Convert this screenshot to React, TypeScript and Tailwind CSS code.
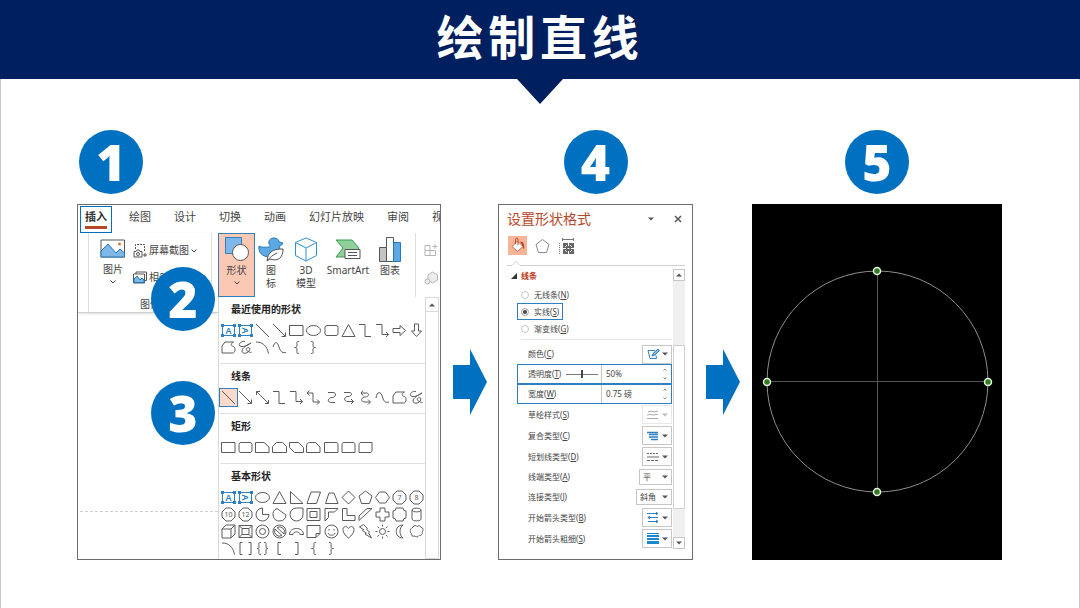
import type { ReactNode } from "react";

/**
 * Tutorial slide: "Draw a straight line" in five numbered steps.
 * Insert tab + shape gallery, format pane, and the resulting drawing.
 */
const tabs = ["绘图", "设计", "切换", "动画", "幻灯片放映", "审阅", "视"];

const octagon = "M6 2h5l4 4v5l-4 4H6l-4-4V6z";

// outlines on a 17 x 17 cell
const outlines: Record<string, string> = {
  line: "M2 2l13 13",
  arrowLine: "M2 2l12 12M14.500 10.500v4h-4",
  doubleArrow: "M2.500 2.500l12 12M2.500 6v-3.500h3.500M14.500 11v3.500h-3.500",
  rect: "M1.500 3.500h13.500v10H1.500z",
  ellipse: "M1.500 8.500a7 5 0 1 0 14 0a7 5 0 1 0-14 0z",
  roundRect: "M4 3.500h9a2 2 0 0 1 2 2v6a2 2 0 0 1-2 2H4a2 2 0 0 1-2-2v-6a2 2 0 0 1 2-2z",
  triangle: "M8.500 2.500l6.500 12H2z",
  elbow: "M2 2.500h6v12h6",
  elbowArrow: "M2 2.500h6v10h6.500M12 10l2.500 2.500l-2.500 2.500",
  elbowDouble: "M2 4h6v9h6.500M4.500 1.500l-2.500 2.500l2.500 2.500M12 10.500l2.500 2.500l-2.500 2.500",
  rightArrow: "M2 6.500h7v-3l5.500 5l-5.500 5v-3H2z",
  downArrow: "M6.500 2v7h-3l5 5.500l5-5.500h-3V2z",
  freeform: "M5 3h8.500c-3 1.500-3 4 0 4.500c2 .5 2.500 6.500-1 6.500H2V7z",
  scribble: "M8 2.500c-4-1-7 3-5 4.500s7 0 11-3c-4 2-9 5-9 8s5 3 7 0s0-4-2-3s0 4 4.500 4.500",
  arc: "M2 3c7 0 11 4 12.500 11.500",
  curve: "M2 8c2-6 4-6 6 0s4 6 7 5.500",
  braceLeft: "M11 2.500c-3 0-2 1-2 3.500s-1 2.500-2.500 2.500c1.500 0 2.500 0 2.500 2.500s-1 3.500 2 3.500",
  braceRight: "M6 2.500c3 0 2 1 2 3.500s1 2.500 2.500 2.500c-1.500 0-2.500 0-2.500 2.500s1 3.500-2 3.500",
  sCurve: "M5 3.500h5c4 0 3 5-1 5s-6 5 0 5h3",
  sArrow: "M4 3.500h5c4 0 3 4-1 4s-5 5 0 5h5M11 10l2.500 2.500l-2.500 2.500",
  sDouble: "M4 4h5c4 0 3 4-1 4s-5 5 0 5h5M6 1.500l-2 2.500l2 2.500M11 10.500l2.500 2.500l-2.500 2.500",
  wave: "M2 9c1-7 5-7 6.500-1s4 5.500 6.500 5",
  snipOne: "M1.500 3.500h8.500l5 4.500v5.500H1.500z",
  snipSame: "M5.500 3.500h6l4 4v6h-14v-6z",
  snipDiag: "M1.500 3.500h9l5 5v5h-9l-5-5z",
  snipRound: "M4.500 3.500h6l4.500 4.500v5.500H1.500V7c0-2 1-3.500 3-3.500z",
  roundOne: "M1.500 3.500h11.500c1.500 0 2 1 2 2v8H1.500z",
  roundSame: "M4 3.500h9c1.500 0 2 1 2 2v8H2v-8c0-1 .5-2 2-2z",
  roundDiag: "M4 3.500h11v8c0 1-.5 2-2 2H2v-8c0-1 .5-2 2-2z",
  rightTriangle: "M2.500 2.500v12h12.500z",
  parallelogram: "M6 3h9.500l-4 11.500H2z",
  trapezoid: "M6 4h5l4 10.500H2.500z",
  diamond: "M8.500 2l6.500 6.500l-6.500 6.500l-6.500-6.500z",
  pentagon: "M8.500 2l6.500 5l-2.500 7.500h-8l-2.500-7.500z",
  hexagon: "M5.500 3h6l4 5.500l-4 5.500h-6l-4-5.500z",
  pie: "M8.500 2a6.500 6.500 0 1 0 6.500 6.500H8.500z",
  chord: "M6 2.500a6.500 6.500 0 1 0 9 6.500z",
  tear: "M15 2v6.500a6.500 6.500 0 1 1-6.500-6.500z",
  frame: "M2 2.500h13v12H2zM5 5.500h7v6H5z",
  halfFrame: "M2 15V2.500h13l-3.500 3.500h-6v5.500z",
  lShape: "M2.500 2.500h4.500v7h8v5H2.500z",
  stripe: "M2 14.500v-4.500l8-7.500h5z",
  cross: "M6 2h5v4h4v5h-4v4H6v-4H2V6h4z",
  plaque: "M5 2h7a3 3 0 0 0 3 3v7a3 3 0 0 0-3 3H5a3 3 0 0 0-3-3V5a3 3 0 0 0 3-3z",
  can: "M4 4c0-2.500 9-2.500 9 0v9c0 2.500-9 2.500-9 0zM4 4c0 2.500 9 2.500 9 0",
  cube: "M2 6l4-4h9v9l-4 4H2zM2 6h9v9M11 6l4-4",
  bevel: "M2 2.500h13v12H2zM5 5.500h7v6H5zM2 2.500l3 3M15 2.500l-3 3M2 14.500l3-3M15 14.500l-3-3",
  donut: "M2 8.500a6.500 6.500 0 1 0 13 0a6.500 6.500 0 1 0-13 0zM5.500 8.500a3 3 0 1 0 6 0a3 3 0 1 0-6 0z",
  forbidden: "M2 8.500a6.500 6.500 0 1 0 13 0a6.500 6.500 0 1 0-13 0zM6 4.500l7 6.500a5 5 0 0 0-7-6.500zM11 12.500l-7-6.500a5 5 0 0 0 7 6.500z",
  blockArc: "M1.500 11.500c0-8 14-8 14 0h-3.500c0-3.500-7-3.500-7 0z",
  folded: "M2 2.500h13v8l-4 4H2zM15 10.500h-4v4",
  smile: "M2 8.500a6.500 6.500 0 1 0 13 0a6.500 6.500 0 1 0-13 0zM5 10c1 3 6 3 7 0M6 6v1.500M11 6v1.500",
  heart: "M8.500 15C-2 7 5 0 8.500 5.500C12 0 19 7 8.500 15z",
  bolt: "M6.500 1.500l4 4l-1 .8l3 2.700l-1 .8l3 5.200l-6.500-4l1.300-.8l-4-2.700l1.500-.8l-4.300-2.700z",
  sun: "M5.500 8.500a3 3 0 1 0 6 0a3 3 0 1 0-6 0zM8.500 1.500v2M8.500 13.500v2M1.500 8.500h2M13.500 8.500h2M3.500 3.500l1.500 1.500M12 12l1.500 1.500M3.500 13.500l1.500-1.500M12 5l1.500-1.500",
  moon: "M12 2c-9 0-9 13 0 13c-4-3-4-10 0-13z",
  cloud: "M5 4c1-2 4-1.500 4-.5c2-1.500 4-.5 4 1c3 0 2 4 1 4.500c1 2-1 4-3 3.500c-1 2-4 1.500-4 .5c-3 1-4-1-3.500-2.500c-2-1-1.500-5 1.500-6.500z",
  brackets: "M5.500 2.500h-2.500v12h2.500M11.500 2.500h2.500v12h-2.500",
  braces: "M7 2.500c-3 0-2 1-2 3.500s-1 2.500-2 2.500c1 0 2 0 2 2.500s-1 3.500 2 3.500M10 2.500c3 0 2 1 2 3.500s1 2.500 2 2.500c-1 0-2 0-2 2.500s1 3.500-2 3.500",
  bracketLeft: "M10 2.500H7v12h3",
  bracketRight: "M7 2.500h3v12H7",
  oct7: octagon,
  oct8: octagon,
  oct10: octagon,
  oct12: octagon,
};

const galleries = [
  {
    title: "最近使用的形状",
    shapes:
      "textH textV line arrowLine rect ellipse roundRect triangle elbow elbowArrow rightArrow downArrow freeform scribble arc curve braceLeft braceRight",
  },
  {
    title: "线条",
    shapes:
      "line arrowLine doubleArrow elbow elbowArrow elbowDouble sCurve sArrow sDouble wave freeform scribble",
    active: 0,
  },
  {
    title: "矩形",
    shapes: "rect roundRect snipOne snipSame snipDiag snipRound roundOne roundSame roundDiag",
  },
  {
    title: "基本形状",
    shapes:
      "textH textV ellipse triangle rightTriangle parallelogram trapezoid diamond pentagon hexagon oct7 oct8 oct10 oct12 pie chord tear frame halfFrame lShape stripe cross plaque can cube bevel donut forbidden blockArc folded smile heart bolt sun moon cloud arc brackets braces bracketLeft bracketRight braceLeft braceRight",
  },
];

function Shape({ name }: { name: string }) {
  if (name === "textH" || name === "textV") {
    return (
      <svg width="17" height="17" viewBox="0 0 17 17" fill="none" stroke="#2f7fc1">
        <path d="M2.500 3.500h12v10h-12z" />
        <path d="M1 2h3v3H1zM13 2h3v3h-3zM1 12h3v3H1zM13 12h3v3h-3z" fill="#2f7fc1" stroke="none" />
        <text
          x="8.500"
          y="12"
          textAnchor="middle"
          fontSize="9"
          fontWeight="600"
          fill="#2f7fc1"
          stroke="none"
          transform={name === "textV" ? "rotate(90 8.500 8.500)" : undefined}
        >
          A
        </text>
      </svg>
    );
  }
  return (
    <svg width="17" height="17" viewBox="0 0 17 17" fill="none" stroke="#5a5a5a">
      <path d={outlines[name]} />
      {name.startsWith("oct") && (
        <text x="8.500" y="11" textAnchor="middle" fontSize="7" fill="#5a5a5a" stroke="none">
          {name.slice(3)}
        </text>
      )}
    </svg>
  );
}

function Badge({ n }: { n: number }) {
  return (
    <span className="flex size-16 items-center justify-center rounded-full bg-[#0070c0] text-[50px] leading-none font-black text-white">
      {n}
    </span>
  );
}

function StepArrow() {
  return (
    <svg className="self-center justify-self-center" width="34" height="66" viewBox="0 0 34 66" fill="#0070c0">
      <path d="M0 16h17V0l17 33l-17 33V50H0z" />
    </svg>
  );
}

function Chevron() {
  return (
    <svg width="6" height="4" viewBox="0 0 6 4" fill="none" stroke="#444">
      <path d="M.5.5L3 3L5.500.5" />
    </svg>
  );
}

function Caret({ up = false, color = "#555" }: { up?: boolean; color?: string }) {
  return (
    <svg className="shrink-0" width="6" height="4" viewBox="0 0 6 4" fill={color}>
      <path d={up ? "M0 3.500h6l-3-3z" : "M0 .5h6l-3 3z"} />
    </svg>
  );
}

function RibbonButton({ icon, width, children }: { icon: ReactNode; width: string; children: ReactNode }) {
  return (
    <button type="button" className={`flex shrink-0 flex-col items-center pt-1 leading-[13px] ${width}`}>
      {icon}
      <span className="mt-0.5 text-center">{children}</span>
    </button>
  );
}

function InsertPanel() {
  return (
    <div className="relative flex flex-col overflow-hidden border border-[#6b6b6b] bg-white text-[10px] text-[#444]">
      <nav className="flex h-7 items-start pt-px pl-0.5 text-[11px] leading-[19px] whitespace-nowrap">
        <a href="#insert" className="h-[27px] border border-[#0070c0] px-1 font-bold text-[#333]">
          <span className="block border-b-[3px] border-[#b7472a]">插入</span>
        </a>
        <div className="ml-[17px] flex gap-[23px] pt-px">
          {tabs.map((tab) => (
            <a key={tab} href="#tab">
              {tab}
            </a>
          ))}
        </div>
      </nav>

      <div className="flex flex-1">
        {/* Images group, with the slide canvas below */}
        <div className="flex w-[140px] shrink-0 flex-col">
          <div className="h-20 border-b border-[#d0d0d0] pr-1.5 pl-2.5 shadow-sm">
            <div className="flex h-full flex-col border-x border-[#dedede]">
              <div className="flex h-16 pl-1">
                <button type="button" className="flex w-10 shrink-0 flex-col items-center pt-1.5">
                  <svg width="26" height="19" viewBox="0 0 26 19" fill="none" stroke="#555">
                    <path d="M1 1h23.500v17H1z" fill="#fff" />
                    <path d="M1 12l7-7l8 9l4-4l4.500 4v4H1z" fill="#7db8e8" stroke="#2577b8" />
                    <circle cx="19.500" cy="5" r="1.500" fill="#d9772f" stroke="none" />
                  </svg>
                  <span className="mt-1 leading-[14px]">图片</span>
                  <span className="mt-1">
                    <Chevron />
                  </span>
                </button>
                <div className="flex flex-col pt-1 whitespace-nowrap">
                  <button type="button" className="flex h-[27px] items-center gap-0.5">
                    <svg className="shrink-0" width="14" height="15" viewBox="0 0 14 15" fill="none" stroke="#555">
                      <path d="M2.500 6V1.500h9V9" strokeDasharray="2 1" />
                      <path d="M1 8.500h2l1-1.500h2l1 1.500h2V14H1zM12 10v4M10 12h4" />
                      <circle cx="5" cy="11" r="1.500" />
                    </svg>
                    屏幕截图
                    <Chevron />
                  </button>
                  <button type="button" className="flex h-[27px] items-center gap-0.5">
                    <svg className="shrink-0" width="14" height="13" viewBox="0 0 14 13" fill="none" stroke="#555">
                      <path d="M3 3V1h10.500v8.500H12M.5 3h11v9H.5z" fill="#fff" />
                      <path d="M1 8l3-3l3 4l2-2l2 2v2.500H1z" fill="#7db8e8" stroke="#2577b8" />
                    </svg>
                    相册
                  </button>
                </div>
              </div>
              <span className="text-center leading-4">图像</span>
            </div>
          </div>
          <div className="mb-[47px] ml-0.5 flex-1 border-b border-dashed border-[#cfcfcf]" />
        </div>

        <div className="flex min-w-0 flex-1 flex-col">
          <div className="flex h-16 overflow-hidden">
            <button
              type="button"
              className="flex w-[37px] shrink-0 flex-col items-center border border-[#2f7fc1] bg-[#fbc8b4] pt-0.5 leading-[13px]"
            >
              <svg width="26" height="26" viewBox="0 0 26 26" stroke="#2f7fc1">
                <path d="M1.500 1.500h16v16h-16z" fill="#7db8e8" />
                <circle cx="16.500" cy="16.500" r="8" fill="#fff" stroke="#555" />
              </svg>
              <span className="mt-0.5">形状</span>
              <span className="mt-1">
                <Chevron />
              </span>
            </button>
            <RibbonButton
              width="w-8"
              icon={
                <svg width="26" height="25" viewBox="0 0 26 25">
                  <path
                    d="M1 9c3 2 7 1 10 1c2 0 1-1 0-3c-1-4 2-6 5-6c3 0 5 2 5 4l4 1c-1 2-2 3-4 3c3 5-2 11-9 11C4 20 0 15 1 9z"
                    fill="#5ba8e5"
                    stroke="#2577b8"
                  />
                  <path d="M9 24c1-9 5-12 16-12c0 8-4 13-13 10zM9 24c3-4 6-6 10-8" fill="#fff" stroke="#555" />
                </svg>
              }
            >
              图
              <br />标
            </RibbonButton>
            <RibbonButton
              width="w-[38px]"
              icon={
                <svg width="24" height="25" viewBox="0 0 24 25" fill="#fff" stroke="#2f8fd6">
                  <path d="M12 1l10.500 4.500v13L12 24L1.500 18.500v-13z" />
                  <path d="M1.500 5.500L12 11l10.500-5.500M12 11v13" />
                </svg>
              }
            >
              3D
              <br />
              模型
            </RibbonButton>
            <RibbonButton
              width="w-[46px]"
              icon={
                <svg width="26" height="25" viewBox="0 0 26 25">
                  <path d="M1 3h16l7 8l-7 9H1l7-9z" fill="#8fd09a" stroke="#3a9a52" />
                  <path d="M10 12.500h15v9H10z" fill="#fff" stroke="#555" />
                  <path d="M13 15.500h9M13 18.500h9" stroke="#555" />
                </svg>
              }
            >
              SmartArt
            </RibbonButton>
            <RibbonButton
              width="w-[38px]"
              icon={
                <svg width="24" height="25" viewBox="0 0 24 25" stroke="#555">
                  <path d="M1.500 10.500h7v14h-7z" fill="#c4c4c4" />
                  <path d="M8.500.5h7v24h-7z" fill="#fff" />
                  <path d="M15.500 5.500h7v19h-7z" fill="#5ba8e5" stroke="#2577b8" />
                </svg>
              }
            >
              图表
            </RibbonButton>
            <div className="ml-1.5 flex shrink-0 flex-col gap-3.5 border-l border-[#dedede] pt-2.5 pl-2">
              <svg width="15" height="14" viewBox="0 0 15 14" fill="none" stroke="#b5b5b5">
                <path d="M1 2.500h5v10H1zM1 7.500h10.500v5H6M11 1v5M8.500 3.500h5" />
              </svg>
              <svg width="15" height="14" viewBox="0 0 15 14" fill="#ececec" stroke="#b5b5b5">
                <path d="M8.500 1l5 3v5l-5 3l-4.500-3V4z" />
                <circle cx="3.500" cy="10.500" r="2.500" />
              </svg>
            </div>
          </div>

          {/* Shape gallery */}
          <div className="flex flex-1">
            <div className="min-w-0 flex-1 border-l border-[#d8d8d8] pb-0.5 pl-px">
              {galleries.map((g, gi) => (
                <section
                  key={g.title}
                  className={gi < galleries.length - 1 ? "border-b border-[#e0e0e0] pb-[7px]" : ""}
                >
                  <h3 className="pl-[11px] leading-[25px] font-bold text-[#222]">{g.title}</h3>
                  <div className="grid grid-cols-12">
                    {g.shapes.split(" ").map((name, i) => (
                      <button
                        key={i}
                        type="button"
                        aria-label={name}
                        className={`flex h-[17px] items-center justify-center ${
                          g.active === i ? "bg-[#fbd9cb] outline outline-[#2f7fc1]" : ""
                        }`}
                      >
                        <Shape name={name} />
                      </button>
                    ))}
                  </div>
                </section>
              ))}
            </div>
            <div className="mr-px w-[14px] shrink-0 border border-[#d8d8d8]">
              <div className="flex h-[14px] items-center justify-center border-b border-[#d8d8d8]">
                <Caret up />
              </div>
            </div>
          </div>
        </div>
      </div>

      {/* Step markers laid over the capture */}
      <div className="absolute top-[62px] left-[73px]">
        <Badge n={2} />
      </div>
      <div className="absolute top-[176px] left-[73px]">
        <Badge n={3} />
      </div>
    </div>
  );
}

function FieldLabel({ text, hotkey }: { text: string; hotkey: string }) {
  return (
    <>
      {text}(<u>{hotkey}</u>)
    </>
  );
}

const lineKinds = [
  { id: "none", text: "无线条", hotkey: "N" },
  { id: "solid", text: "实线", hotkey: "S" },
  { id: "gradient", text: "渐变线", hotkey: "G" },
];

function MenuButton({ label, muted = false, children }: { label: string; muted?: boolean; children: ReactNode }) {
  return (
    <button
      type="button"
      aria-label={label}
      className={`flex h-[19px] w-[30px] items-center justify-between border pr-[3px] pl-1 ${
        muted ? "border-[#e8e8e8]" : "border-[#c6c6c6]"
      }`}
    >
      {children}
      <Caret color={muted ? "#bbb" : "#555"} />
    </button>
  );
}

function PropertyRow({ text, hotkey, height, children }: { text: string; hotkey: string; height: string; children: ReactNode }) {
  return (
    <div className={`flex items-center justify-between pl-[11px] ${height}`}>
      <span>
        <FieldLabel text={text} hotkey={hotkey} />
      </span>
      {children}
    </div>
  );
}

function SelectBox({ label, value, width }: { label: string; value: string; width: string }) {
  return (
    <div className={`flex h-4 items-center border border-[#c6c6c6] pr-[3px] pl-[3px] ${width}`}>
      <select aria-label={label} defaultValue={value} className="min-w-0 flex-1 appearance-none bg-transparent leading-3">
        <option>{value}</option>
      </select>
      <Caret />
    </div>
  );
}

function SpinBox({ id, value }: { id: string; value: string }) {
  return (
    <div className="flex h-[18px] w-[70px] items-center border-l border-[#c6c6c6] pr-1 pl-1">
      <input id={id} type="text" defaultValue={value} className="min-w-0 flex-1 bg-transparent leading-3" />
      <svg width="4" height="12" viewBox="0 0 4 12" fill="none" stroke="#888">
        <path d="M.5 2.500L2 1l1.500 1.500M.5 9.500L2 11l1.500-1.500" />
      </svg>
    </div>
  );
}

function FormatPane() {
  return (
    <div className="border border-[#6b6b6b] bg-white pr-[7px] pl-2 text-[8px] leading-3 whitespace-nowrap text-[#444]">
      <div className="flex h-7 items-center">
        <h2 className="flex-1 text-[14px] leading-5 text-[#b7472a]">设置形状格式</h2>
        <Caret />
        <button type="button" aria-label="关闭" className="mr-[3px] ml-5">
          <svg width="8" height="8" viewBox="0 0 8 8" stroke="#555" strokeWidth="1.500">
            <path d="M1 1l6 6M7 1l-6 6" />
          </svg>
        </button>
      </div>

      <div className="flex items-center gap-2 pt-[3px] pl-px">
        <button type="button" aria-label="填充与线条" className="bg-[#f8b496]">
          <svg width="19" height="19" viewBox="0 0 19 19">
            <path d="M4 10.500l5.500-5.500l5.500 5.500l-5.500 5z" fill="#fff" stroke="#d0694a" />
            <path d="M7.500 8V3.500c0-1.500 2.500-1.500 2.500 0V9" fill="none" stroke="#b7472a" />
            <path d="M12 5.500c3.500 0 5 3 4 8c-1-1-1-3-2-4.500z" fill="#b7472a" />
          </svg>
        </button>
        <button type="button" aria-label="效果">
          <svg width="15" height="16" viewBox="0 0 15 16" fill="none" stroke="#8a8a8a">
            <path d="M7.500 1.500l6.500 5l-2.500 8h-8l-2.500-8z" />
          </svg>
        </button>
        <button type="button" aria-label="大小与属性">
          <svg width="16" height="16" viewBox="0 0 16 16" fill="none" stroke="#777">
            <path d="M1.500 5v11" strokeDasharray="1 1" />
            <path d="M4.500 0v3M15.500 0v3M4.500 1.500h11" />
            <path d="M5 5h11v11H5z" fill="#666" stroke="none" />
            <path d="M10.500 5v3M10.500 13v3M5 10.500h3M13 10.500h3M9.500 10.500h2" stroke="#fff" />
            <path d="M7 9l2-2M12 7l2 2M7 12l2 2M12 14l2-2" stroke="#ddd" />
          </svg>
        </button>
      </div>

      <div className="mt-1.5 flex items-end">
        <svg width="18" height="5" viewBox="0 0 18 5" fill="none" stroke="#cfcfcf">
          <path d="M0 4.500h5l4-4l4 4h5" />
        </svg>
        <div className="h-px flex-1 bg-[#cfcfcf]" />
      </div>

      <div className="flex pt-0.5">
        <div className="min-w-0 flex-1 pr-px">
          <h3 className="flex h-[15px] items-center gap-1 pl-1 font-bold text-[#c0391b]">
            <svg width="6" height="6" viewBox="0 0 6 6" fill="#333">
              <path d="M6 0v6H0z" />
            </svg>
            线条
          </h3>
          <div className="mt-[3px] flex flex-col items-start pl-2.5">
            {lineKinds.map((k) => (
              <label
                key={k.id}
                className={`flex h-[17px] items-center gap-[5px] border px-[3px] ${
                  k.id === "solid" ? "border-[#2f7fc1]" : "border-transparent"
                }`}
              >
                <input
                  type="radio"
                  name="line-kind"
                  defaultChecked={k.id === "solid"}
                  className="size-2 appearance-none rounded-full border border-[#c4c4c4] bg-white checked:bg-[#444] checked:shadow-[inset_0_0_0_1px_#fff]"
                />
                <span>
                  <FieldLabel text={k.text} hotkey={k.hotkey} />
                </span>
              </label>
            ))}
          </div>
          <div className="mt-0.5 mb-1 ml-3.5 h-px bg-[#e4e4e4]" />

          <div className="pl-2.5">
            <PropertyRow text="颜色" hotkey="C" height="h-5">
              <MenuButton label="颜色">
                <svg width="13" height="12" viewBox="0 0 13 12" fill="none" stroke="#2f7fc1">
                  <path d="M8 2.500H1l2 8h6.500l-.5-3" />
                  <path d="M5 8l1-2.500L11 1l1.500 1.500L8 7z" fill="#7db8e8" />
                </svg>
              </MenuButton>
            </PropertyRow>
            <div className="flex h-5 items-center border border-[#2f7fc1] pl-2.5">
              <label htmlFor="opacity" className="flex-1">
                <FieldLabel text="透明度" hotkey="T" />
              </label>
              <input
                type="range"
                aria-label="透明度"
                defaultValue={50}
                className="mr-[3px] h-2 w-8 appearance-none bg-[linear-gradient(#777,#777)] bg-[length:100%_1px] bg-center bg-no-repeat [&::-webkit-slider-thumb]:h-2 [&::-webkit-slider-thumb]:w-0.5 [&::-webkit-slider-thumb]:appearance-none [&::-webkit-slider-thumb]:bg-[#444]"
              />
              <SpinBox id="opacity" value="50%" />
            </div>
            <div className="flex h-5 items-center border border-[#2f7fc1] pl-2.5">
              <label htmlFor="weight" className="flex-1">
                <FieldLabel text="宽度" hotkey="W" />
              </label>
              <SpinBox id="weight" value="0.75 磅" />
            </div>
            <PropertyRow text="草绘样式" hotkey="S" height="h-[21px]">
              <MenuButton label="草绘样式" muted>
                <svg width="12" height="10" viewBox="0 0 12 10" fill="none" stroke="#aaa">
                  <path d="M1 2l3-1l3 1l4-1M0 5l3-.5l4 .5l4-1M0 8.500h11" />
                </svg>
              </MenuButton>
            </PropertyRow>
            <PropertyRow text="复合类型" hotkey="C" height="h-[21px]">
              <MenuButton label="复合类型">
                <svg width="12" height="10" viewBox="0 0 12 10" stroke="#2f7fc1">
                  <path d="M0 1.500h11M2 3.500h9M2 6h9M4 8.500h7" strokeWidth="1.500" />
                </svg>
              </MenuButton>
            </PropertyRow>
            <PropertyRow text="短划线类型" hotkey="D" height="h-[21px]">
              <MenuButton label="短划线类型">
                <svg width="12" height="10" viewBox="0 0 12 10" stroke="#666">
                  <path d="M0 1.500h12" strokeDasharray="2 1" />
                  <path d="M0 5h12" />
                  <path d="M0 8.500h12" strokeDasharray="3 1" />
                </svg>
              </MenuButton>
            </PropertyRow>
            <PropertyRow text="线端类型" hotkey="A" height="h-5">
              <SelectBox label="线端类型" value="平" width="w-[33px]" />
            </PropertyRow>
            <PropertyRow text="连接类型" hotkey="J" height="h-5">
              <SelectBox label="连接类型" value="斜角" width="w-[36px]" />
            </PropertyRow>
            <PropertyRow text="开始箭头类型" hotkey="B" height="h-[21px]">
              <MenuButton label="开始箭头类型">
                <svg width="12" height="11" viewBox="0 0 12 11" fill="none" stroke="#2f7fc1">
                  <path d="M0 1.500h11M1 5.500h10M1 9.500h10M9 0l2 1.500L9 3M3 4L1 5.500L3 7M9 8l2 1.500L9 11" />
                </svg>
              </MenuButton>
            </PropertyRow>
            <PropertyRow text="开始箭头粗细" hotkey="S" height="h-[21px]">
              <MenuButton label="开始箭头粗细">
                <svg width="12" height="11" viewBox="0 0 12 11" fill="#1b87d0">
                  <path d="M0 0h12v1H0zM0 2h12v2H0zM0 5h12v2H0zM0 8h12v3H0z" />
                </svg>
              </MenuButton>
            </PropertyRow>
          </div>
        </div>

        {/* Pane scrollbar */}
        <div className="mt-px flex w-3 shrink-0 flex-col bg-[#f0f0f0]">
          <div className="flex h-3 items-center justify-center border border-[#c6c6c6] bg-white">
            <Caret up />
          </div>
          <div className="mt-16 flex-1 border border-[#d0d0d0] bg-white" />
          <div className="mt-7 flex h-3 items-center justify-center border border-[#c6c6c6] bg-white">
            <Caret />
          </div>
        </div>
      </div>
    </div>
  );
}

const handles = [
  [125, 67],
  [236, 178],
  [125, 288],
  [15, 178],
];

function Drawing() {
  return (
    <div className="flex items-center bg-black">
      <svg className="w-full" viewBox="0 0 250 356" fill="none">
        <circle cx="125.500" cy="177.500" r="110.500" stroke="#8e8e8e" />
        <path d="M125.500 67v221M15 177.500h221" stroke="#555" />
        {handles.map(([x, y]) => (
          <circle key={`${x}-${y}`} cx={x} cy={y} r="3.500" fill="#2f7d1f" stroke="#e8f3e4" strokeWidth="1.500" />
        ))}
      </svg>
    </div>
  );
}

export default function App() {
  return (
    <div className="flex min-h-screen flex-col bg-white font-['Noto_Sans','Noto_Sans_CJK_SC',sans-serif]">
      <header className="flex h-[79px] items-center justify-center bg-[#001f5f] pb-1">
        <h1 className="text-[47px] leading-none font-bold tracking-widest text-white">绘制直线</h1>
      </header>
      <main className="flex flex-1 flex-col border-x border-b border-[#c8c8c8] px-[76px] pb-12">
        <svg className="self-center" width="46" height="25" viewBox="0 0 46 25" fill="#001f5f">
          <path d="M0 0h46L23 25z" />
        </svg>
        <div className="mt-[26px] mr-px grid grid-cols-[364fr_57fr_195fr_59fr_250fr] gap-y-2.5">
          <div className="pl-0.5">
            <Badge n={1} />
          </div>
          <div className="col-start-3 justify-self-center">
            <Badge n={4} />
          </div>
          <div className="col-start-5 justify-self-center">
            <Badge n={5} />
          </div>
          <InsertPanel />
          <StepArrow />
          <FormatPane />
          <StepArrow />
          <Drawing />
        </div>
      </main>
    </div>
  );
}
